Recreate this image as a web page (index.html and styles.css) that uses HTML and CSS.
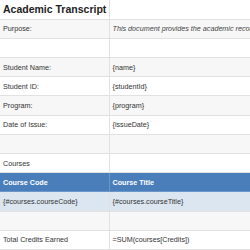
FILE: index.html
```html
<!DOCTYPE html>
<html lang="en">
<head>
    <meta charset="UTF-8">
    <meta name="viewport" content="width=device-width, initial-scale=1.0">
    <title>Academic Transcript</title>
    <link rel="stylesheet" href="styles.css">
</head>
<body>

    <table class="sheet">
        <colgroup>
            <col class="col-label">
            <col class="col-value">
        </colgroup>
        <tr class="title-row">
            <td class="title">Academic Transcript</td>
            <td></td>
        </tr>
        <tr class="stripe">
            <td>Purpose:</td>
            <td class="note">This document provides the academic record of the student.</td>
        </tr>
        <tr>
            <td></td>
            <td></td>
        </tr>
        <tr class="stripe">
            <td>Student Name:</td>
            <td>{name}</td>
        </tr>
        <tr>
            <td>Student ID:</td>
            <td>{studentId}</td>
        </tr>
        <tr class="stripe">
            <td>Program:</td>
            <td>{program}</td>
        </tr>
        <tr>
            <td>Date of Issue:</td>
            <td>{issueDate}</td>
        </tr>
        <tr class="stripe">
            <td></td>
            <td></td>
        </tr>
        <tr>
            <td>Courses</td>
            <td></td>
        </tr>
        <tr class="head">
            <td>Course Code</td>
            <td>Course Title</td>
        </tr>
        <tr class="data">
            <td>{#courses.courseCode}</td>
            <td>{#courses.courseTitle}</td>
        </tr>
        <tr class="stripe">
            <td></td>
            <td></td>
        </tr>
        <tr>
            <td>Total Credits Earned</td>
            <td>=SUM(courses[Credits])</td>
        </tr>
    </table>

</body>
</html>
```

FILE: styles.css
```css
body {
    margin: 0;
    font-family: "Liberation Sans", Arial, sans-serif;
    background-color: #fff;
    overflow: hidden;
}
.sheet {
    border-collapse: collapse;
    table-layout: fixed;
    width: 420px;
    font-size: 7.2px;
    color: #333;
}
.col-label {
    width: 109px;
}
.col-value {
    width: 311px;
}
.sheet tr {
    height: 19.2px;
}
.sheet td {
    border: 1.5px solid #e1e1e1;
    padding: 0 3px;
    white-space: nowrap;
    overflow: hidden;
    vertical-align: middle;
}
.sheet .title-row td {
    border-top: none;
}
.sheet tr td:first-child {
    border-left: none;
}
.title {
    font-size: 10.5px;
    font-weight: bold;
    color: #222;
}
.note {
    font-style: italic;
    color: #444;
}
.stripe {
    background-color: #f7f7f7;
}
.head {
    background-color: #4a7ebb;
    color: #fff;
    font-weight: bold;
}
.head td {
    border-color: #6b96c8;
}
.data {
    background-color: #dce6f1;
}
```
